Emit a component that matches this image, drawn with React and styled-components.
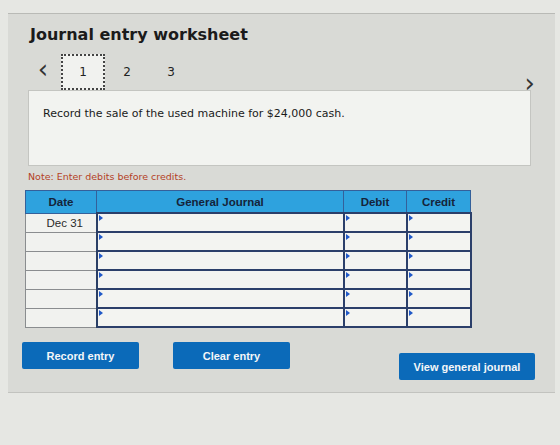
import styled, { createGlobalStyle } from "styled-components";

const GlobalStyle = createGlobalStyle`
  body {
    margin: 0;
    background: #e6e7e3;
    font-family: "DejaVu Sans", Verdana, sans-serif;
  }
`;

const rows = ["Dec 31", "", "", "", "", ""];

function App() {
  return (
    <>
      <GlobalStyle />
      <Page>
        <Panel>
          <Title>Journal entry worksheet</Title>
          <NavRow>
            <Arrow>&lsaquo;</Arrow>
            <Tabs>
              <Tab active>1</Tab>
              <Tab>2</Tab>
              <Tab>3</Tab>
            </Tabs>
            <Arrow next>&rsaquo;</Arrow>
          </NavRow>
          <Question>Record the sale of the used machine for $24,000 cash.</Question>
          <Note>Note: Enter debits before credits.</Note>
          <Table>
            <colgroup>
              <col style={{ width: 71 }} />
              <col style={{ width: 247 }} />
              <col style={{ width: 63 }} />
              <col style={{ width: 64 }} />
            </colgroup>
            <thead>
              <tr>
                <Th>Date</Th>
                <Th>General Journal</Th>
                <Th>Debit</Th>
                <Th>Credit</Th>
              </tr>
            </thead>
            <tbody>
              {rows.map((date, i) => (
                <tr key={i}>
                  <DateCell>{date}</DateCell>
                  <InputCell>
                    <Marker />
                  </InputCell>
                  <InputCell>
                    <Marker />
                  </InputCell>
                  <InputCell>
                    <Marker />
                  </InputCell>
                </tr>
              ))}
            </tbody>
          </Table>
          <Buttons>
            <Button>Record entry</Button>
            <Button>Clear entry</Button>
            <Spacer />
            <Button wide>View general journal</Button>
          </Buttons>
        </Panel>
      </Page>
    </>
  );
}

export default App;

const Page = styled.div`
  width: 560px;
  height: 445px;
  padding: 13px 5px 0 8px;
  box-sizing: border-box;
`;

const Panel = styled.div`
  background: #d9dad6;
  border-top: 1px solid #b9bab6;
  border-bottom: 1px solid #c2c3bf;
  padding: 11px 20px 0 17px;
  height: 380px;
  box-sizing: border-box;
`;

const Title = styled.h2`
  margin: 0 0 0 5px;
  font-size: 16px;
  font-weight: bold;
  color: #1b1b1b;
`;

const NavRow = styled.div`
  display: flex;
  align-items: center;
  margin-top: 10px;
  height: 36px;
`;

const Arrow = styled.div`
  font-size: 26px;
  line-height: 1;
  color: #333;
  width: 36px;
  text-align: ${(p) => (p.next ? "right" : "center")};
  margin-left: ${(p) => (p.next ? "auto" : "0")};
  margin-top: ${(p) => (p.next ? "22px" : "-6px")};
`;

const Tabs = styled.div`
  display: flex;
`;

const Tab = styled.div`
  width: 44px;
  height: 36px;
  display: flex;
  align-items: center;
  justify-content: center;
  font-size: 12px;
  color: #222;
  box-sizing: border-box;
  background: ${(p) => (p.active ? "#f1f2ef" : "transparent")};
  border: ${(p) => (p.active ? "2px dotted #444" : "none")};
`;

const Question = styled.div`
  background: #f2f3f0;
  border: 1px solid #c4c5c1;
  margin: 0 4px 0 3px;
  height: 76px;
  box-sizing: border-box;
  padding: 16px 14px;
  font-size: 11px;
  color: #1a1a1a;
`;

const Note = styled.div`
  margin: 5px 0 0 3px;
  font-size: 9.5px;
  color: #b43f26;
`;

const Table = styled.table`
  margin: 8px 0 0 0;
  border-collapse: collapse;
  table-layout: fixed;
  width: 445px;
  font-family: "Liberation Sans", Arial, sans-serif;
`;

const Th = styled.th`
  background: #2ea2de;
  border: 1px solid #34609a;
  height: 21px;
  padding: 0;
  font-size: 11.5px;
  font-weight: bold;
  color: #15243a;
`;

const DateCell = styled.td`
  background: #f1f2ef;
  border: 1px solid #8a8d8f;
  border-right: 2px solid #2a3f66;
  height: 18px;
  padding: 0 0 0 8px;
  font-size: 11.5px;
  color: #2a2a2a;
  text-align: center;
`;

const InputCell = styled.td`
  position: relative;
  background: #f3f4f1;
  border: 2px solid #2b3f6a;
  height: 17px;
  padding: 0;
`;

const Marker = styled.span`
  position: absolute;
  left: 1px;
  top: 1px;
  width: 0;
  height: 0;
  border-top: 3px solid transparent;
  border-bottom: 3px solid transparent;
  border-left: 4px solid #1f58c8;
`;

const Buttons = styled.div`
  display: flex;
  align-items: flex-start;
  gap: 34px;
  margin: 14px 0 0 -3px;
`;

const Spacer = styled.div`
  flex: 1;
`;

const Button = styled.button`
  width: ${(p) => (p.wide ? "136px" : "117px")};
  height: 27px;
  margin-top: ${(p) => (p.wide ? "11px" : "0")};
  background: #0b6ab9;
  border: none;
  border-radius: 2px;
  color: #f4f6f8;
  font-family: "Liberation Sans", Arial, sans-serif;
  font-size: 11px;
  font-weight: bold;
`;
